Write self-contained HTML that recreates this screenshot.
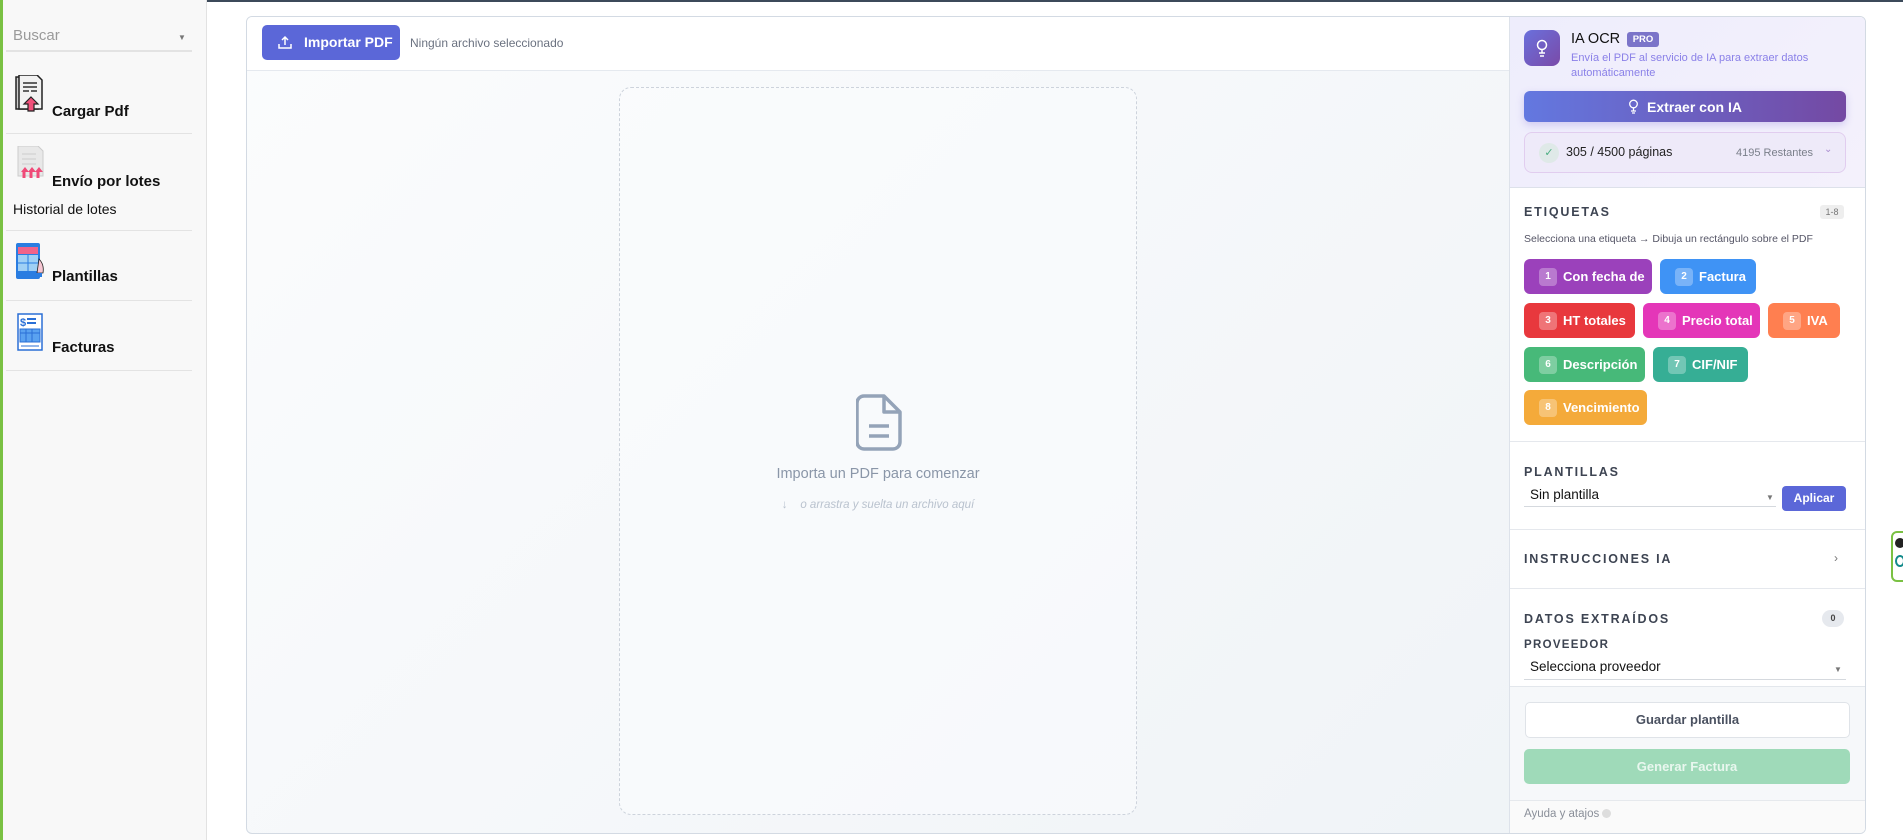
<!DOCTYPE html>
<html><head><meta charset="utf-8"><style>
*{box-sizing:border-box;margin:0;padding:0}
body{width:1903px;height:840px;overflow:hidden;background:#fff;font-family:"Liberation Sans",sans-serif;position:relative}
.a{position:absolute}
.sb{left:0;top:0;width:207px;height:840px;background:#f8f8f8;border-left:3px solid #7ac143;border-right:1px solid #e2e2e2}
.sep{left:6px;width:186px;height:1px;background:#e3e3e3}
.it{left:52px;font-weight:bold;font-size:15px;color:#111}
.card{left:246px;top:16px;width:1620px;height:818px;border:1px solid #d3dae3;border-radius:6px;overflow:hidden;background:linear-gradient(135deg,#fbfcfd,#eef2f6)}
.tb{left:0;top:0;width:1263px;height:54px;background:#fff;border-bottom:1px solid #e5e9ef}
.panel{left:1262px;top:0;width:358px;height:818px;background:#fff;border-left:1px solid #dde2ea}
.h{font-size:12.5px;font-weight:bold;letter-spacing:1.8px;color:#3d4452}
.chip{height:35px;border-radius:6px;color:#fff;font-weight:bold;font-size:13px;display:flex;align-items:center;padding-left:15px}
.chip i{font-style:normal;display:inline-block;width:18px;height:18px;border-radius:4px;background:rgba(255,255,255,.3);font-size:10px;text-align:center;line-height:18px;margin-right:6px}
.sel{font-size:13.5px;color:#111;border-bottom:1px solid #d5d9de;padding:4px 6px}
.car{font-size:8px;color:#777}
</style></head><body>
<div class="a" style="left:0;top:0;width:1903px;height:2px;background:#3c4a5a"></div>
<div class="a sb"></div>
<div class="a" style="left:13px;top:27px;font-size:15px;color:#9a9a9a">Buscar</div>
<div class="a car" style="left:178px;top:33px">▼</div>
<div class="a sep" style="top:50px;height:2px"></div>
<svg class="a" style="left:15px;top:75px" width="30" height="42" viewBox="0 0 30 42"><rect x="1" y="2" width="22" height="32" fill="#ccc" stroke="#222" stroke-width="1.5"/><path d="M4 0h18l5 5v29H4z" fill="#f2f2f2" stroke="#222" stroke-width="1.5"/><path d="M8 8h14M8 12h14M8 16h6M16 16h6" stroke="#333" stroke-width="1.5"/><path d="M16 22l7 7h-4v7h-6v-7H9z" fill="#f0507a" stroke="#222" stroke-width="1.2"/></svg>
<div class="a it" style="top:103px">Cargar Pdf</div>
<div class="a sep" style="top:133px"></div>
<svg class="a" style="left:16px;top:146px" width="28" height="38" viewBox="0 0 28 38"><path d="M2 0h20l5 5v25H2z" fill="#e8e8e8" stroke="#ccc"/><path d="M6 8h14M6 13h14M6 18h14" stroke="#ccc"/><path d="M5 26l4-5 4 5zM12 26l4-5 4 5zM19 26l4-5 4 5z" fill="#f04a78"/><path d="M8 26v6M15 26v6M22 26v6" stroke="#f04a78" stroke-width="3"/></svg>
<div class="a it" style="top:173px">Envío por lotes</div>
<div class="a" style="left:13px;top:201px;font-size:14px;color:#111">Historial de lotes</div>
<div class="a sep" style="top:230px"></div>
<svg class="a" style="left:15px;top:243px" width="30" height="38" viewBox="0 0 30 38"><rect x="1" y="0" width="24" height="36" rx="2" fill="#2a7de1"/><rect x="3" y="4" width="20" height="7" fill="#f0638a"/><rect x="3" y="12" width="20" height="16" fill="#9fd0f5"/><path d="M3 20h20M13 12v16" stroke="#2a7de1"/><path d="M24 16c3 3 5 8 4 14h-6z" fill="#f6c6d2" stroke="#222" stroke-width=".8"/><rect x="19" y="30" width="8" height="4" fill="#2a7de1"/></svg>
<div class="a it" style="top:268px">Plantillas</div>
<div class="a sep" style="top:300px"></div>
<svg class="a" style="left:17px;top:313px" width="26" height="38" viewBox="0 0 26 38"><rect x="1" y="1" width="24" height="36" fill="#fff" stroke="#2a6fd6" stroke-width="1.5"/><text x="3" y="13" font-size="11" font-weight="bold" fill="#2a6fd6" font-family="Liberation Sans">$</text><path d="M10 6h9M10 10h9" stroke="#2a6fd6" stroke-width="2"/><rect x="3" y="16" width="20" height="13" fill="#5aa2f0" stroke="#2a6fd6"/><path d="M9 16v13M15 16v13M3 20h20M4 33h18" stroke="#2a6fd6"/></svg>
<div class="a it" style="top:339px">Facturas</div>
<div class="a sep" style="top:370px"></div>

<div class="a card">
 <div class="a tb">
  <div class="a" style="left:15px;top:8px;width:138px;height:35px;background:#5b67d8;border-radius:5px;color:#fff;font-weight:bold;font-size:14px;line-height:35px;padding-left:42px">Importar PDF
   <svg class="a" style="left:16px;top:10px" width="14" height="14" viewBox="0 0 14 14" fill="none" stroke="#fff" stroke-width="1.5"><path d="M7 10V2M4 5l3-3 3 3M1 9v4h12V9"/></svg></div>
  <div class="a" style="left:163px;top:19px;font-size:12px;color:#6b7280">Ningún archivo seleccionado</div>
 </div>
 <div class="a" style="left:372px;top:70px;width:518px;height:728px;border:1px dashed #cdd3dc;border-radius:12px;background:rgba(250,251,253,.6)"></div>
 <svg class="a" style="left:609px;top:377px" width="46" height="58" viewBox="0 0 46 58" fill="none" stroke="#94a3b8" stroke-width="3.5" stroke-linejoin="round"><path d="M8 2h20l16 16v30a7 7 0 0 1-7 7H8a7 7 0 0 1-7-7V9a7 7 0 0 1 7-7z"/><path d="M28 2v16h16"/><path d="M13 32h20M13 42h20"/></svg>
 <div class="a" style="left:372px;top:449px;width:518px;text-align:center;font-size:14.5px;color:#8a96a8">Importa un PDF para comenzar</div>
 <div class="a" style="left:372px;top:482px;width:518px;text-align:center;font-size:11.5px;color:#b9c2ce;font-style:italic">↓&nbsp;&nbsp;&nbsp;&nbsp;o arrastra y suelta un archivo aquí</div>

 <div class="a panel">
  <div class="a" style="left:0;top:0;width:357px;height:171px;background:linear-gradient(135deg,#eeedfc,#f4f1fc);border-bottom:1px solid #dde1ea"></div>
  <div class="a" style="left:14px;top:13px;width:36px;height:36px;border-radius:8px;background:linear-gradient(135deg,#6a70dc,#7a4aa8)"><svg class="a" style="left:11px;top:9px" width="14" height="18" viewBox="0 0 14 18" fill="none" stroke="#fff" stroke-width="1.5"><circle cx="7" cy="6" r="4.5"/><path d="M7 10v4M4 14h6M5 17h4"/></svg></div>
  <div class="a" style="left:61px;top:14px;font-size:14.5px;color:#111">IA OCR</div>
  <div class="a" style="left:117px;top:15px;width:32px;height:15px;background:#7b74c9;border-radius:3px;color:#fff;font-size:9.5px;font-weight:bold;text-align:center;line-height:15px">PRO</div>
  <div class="a" style="left:61px;top:34px;font-size:11px;line-height:15px;color:#8a80e8;width:290px">Envía el PDF al servicio de IA para extraer datos automáticamente</div>
  <div class="a" style="left:14px;top:74px;width:322px;height:31px;border-radius:6px;background:linear-gradient(90deg,#6378e0,#7449a3);box-shadow:0 3px 8px rgba(110,90,210,.25);color:#fff;font-weight:bold;font-size:14px;display:flex;align-items:center;justify-content:center;gap:8px"><svg width="11" height="15" viewBox="0 0 11 15" fill="none" stroke="#fff" stroke-width="1.3"><circle cx="5.5" cy="5" r="3.8"/><path d="M5.5 9v3M3 12h5M4 14h3"/></svg><span>Extraer con IA</span></div>
  <div class="a" style="left:14px;top:115px;width:322px;height:41px;border:1px solid #e1cdef;border-radius:8px;background:#eeeaf9"></div>
  <div class="a" style="left:29px;top:126px;width:20px;height:20px;border-radius:50%;background:#dfe9e8;color:#4cae82;font-size:11px;text-align:center;line-height:20px">✓</div>
  <div class="a" style="left:56px;top:128px;font-size:12.5px;color:#222">305 / 4500 páginas</div>
  <div class="a" style="left:226px;top:130px;font-size:11px;color:#7a7f8a">4195 Restantes</div>
  <div class="a" style="left:314px;top:127px;font-size:10px;color:#a98ccf">⌄</div>

  <div class="a h" style="left:14px;top:188px">ETIQUETAS</div>
  <div class="a" style="left:310px;top:188px;width:24px;height:14px;background:#eee;border-radius:3px;font-size:9px;color:#777;text-align:center;line-height:14px">1-8</div>
  <div class="a" style="left:14px;top:216px;font-size:10.5px;color:#556">Selecciona una etiqueta → Dibuja un rectángulo sobre el PDF</div>
  <div class="a chip" style="left:14px;top:242px;width:128px;background:#9b41bb"><i>1</i>Con fecha de</div>
  <div class="a chip" style="left:150px;top:242px;width:96px;background:#3f93f5"><i>2</i>Factura</div>
  <div class="a chip" style="left:14px;top:286px;width:111px;background:#e8383d"><i>3</i>HT totales</div>
  <div class="a chip" style="left:133px;top:286px;width:117px;background:#e436b8"><i>4</i>Precio total</div>
  <div class="a chip" style="left:258px;top:286px;width:72px;background:#ff7f50"><i>5</i>IVA</div>
  <div class="a chip" style="left:14px;top:330px;width:121px;background:#47b979"><i>6</i>Descripción</div>
  <div class="a chip" style="left:143px;top:330px;width:95px;background:#36ae95"><i>7</i>CIF/NIF</div>
  <div class="a chip" style="left:14px;top:373px;width:123px;background:#f4aa3a"><i>8</i>Vencimiento</div>
  <div class="a" style="left:0;top:424px;width:357px;height:1px;background:#e5e8ed"></div>

  <div class="a h" style="left:14px;top:448px">PLANTILLAS</div>
  <div class="a sel" style="left:14px;top:466px;width:252px;height:24px">Sin plantilla</div>
  <div class="a car" style="left:256px;top:476px">▼</div>
  <div class="a" style="left:272px;top:469px;width:64px;height:25px;background:#5b67d8;border-radius:4px;color:#fff;font-weight:bold;font-size:12px;text-align:center;line-height:25px">Aplicar</div>
  <div class="a" style="left:0;top:512px;width:357px;height:1px;background:#e5e8ed"></div>
  <div class="a h" style="left:14px;top:535px">INSTRUCCIONES IA</div>
  <div class="a" style="left:324px;top:534px;font-size:12px;color:#777">›</div>
  <div class="a" style="left:0;top:571px;width:357px;height:1px;background:#e5e8ed"></div>
  <div class="a h" style="left:14px;top:595px">DATOS EXTRAÍDOS</div>
  <div class="a" style="left:312px;top:593px;width:22px;height:17px;background:#e6e9ee;border-radius:9px;font-size:9px;font-weight:bold;color:#444;text-align:center;line-height:17px">0</div>
  <div class="a h" style="left:14px;top:622px;font-size:11.5px;letter-spacing:1.3px">PROVEEDOR</div>
  <div class="a sel" style="left:14px;top:638px;width:322px;height:25px">Selecciona proveedor</div>
  <div class="a car" style="left:324px;top:648px">▼</div>
  <div class="a" style="left:0;top:669px;width:358px;height:149px;background:#f6f8fa;border-top:1px solid #e3e7ec"></div>
  <div class="a" style="left:15px;top:685px;width:325px;height:36px;background:#fff;border:1px solid #dfe3e8;border-radius:5px;text-align:center;line-height:34px;font-size:13px;font-weight:bold;color:#4a5160">Guardar plantilla</div>
  <div class="a" style="left:14px;top:732px;width:326px;height:35px;background:#9fdab9;border-radius:5px;text-align:center;line-height:35px;font-size:13px;font-weight:bold;color:#e9f7ef">Generar Factura</div>
  <div class="a" style="left:0;top:783px;width:358px;height:1px;background:#e6e9ed"></div>
  <div class="a" style="left:0;top:784px;width:358px;height:34px;background:#fafafa"></div>
  <div class="a" style="left:14px;top:791px;font-size:11.5px;color:#8a8f99">Ayuda y atajos <span style="display:inline-block;width:9px;height:9px;border-radius:50%;background:#ddd;vertical-align:middle"></span></div>
  <div class="a" style="left:355px;top:0;width:2px;height:428px;background:#d5d8dc"></div>
 </div>
</div>
<div class="a" style="left:1891px;top:531px;width:14px;height:51px;border:2px solid #7ac143;border-radius:6px 0 0 6px;background:#fff"></div>
<div class="a" style="left:1895px;top:538px;width:10px;height:10px;border-radius:50%;background:#222"></div>
<div class="a" style="left:1895px;top:555px;width:10px;height:12px;border-radius:50%;border:2px solid #138a8a"></div>
</body></html>
